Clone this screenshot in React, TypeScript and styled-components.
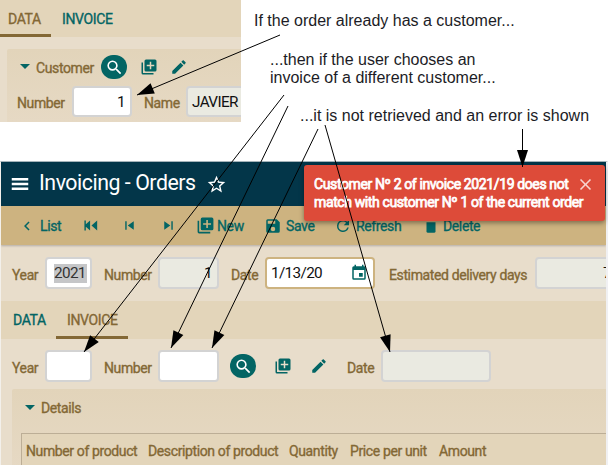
import React from "react";
import styled, { createGlobalStyle, css } from "styled-components";

const teal = "#036564";
const brown = "#836835";

const Global = createGlobalStyle`
  *{box-sizing:border-box}
  body{margin:0;background:#fff;overflow:hidden}
`;

const Page = styled.div`
  position: relative;
  width: 608px;
  height: 465px;
  overflow: hidden;
  background: #fff;
  font: 14px/18px Roboto, sans-serif;
  letter-spacing: -0.38px;
  color: ${brown};
`;
const Top = styled.div`
  display: flex;
  height: 161px;
`;
const CustomerPanel = styled.section`
  flex: none;
  width: 241px;
  height: 122px;
  overflow: hidden;
  background: #e8ddcb;
`;
const Notes = styled.div`
  flex: 1;
  padding-top: 12px;
  font: 16px/18px "Liberation Sans", sans-serif;
  color: #1c1c26;
`;
const Note = styled.p<{ $left: number; $after?: number }>`
  margin: 0 0 ${(p) => p.$after ?? 0}px ${(p) => p.$left}px;
  white-space: nowrap;
  letter-spacing: 0;
`;
const OrdersPanel = styled.section`
  display: flex;
  flex-direction: column;
  height: 304px;
  overflow: hidden;
  border-left: 1px solid #f3f0eb;
  border-right: 2px solid #f0f0f2;
  border-top: 1px solid #a5b4ba;
  background: #e8ddcb;
`;
const Tabs = styled.nav<{ $height: number }>`
  display: flex;
  flex: none;
  height: ${(p) => p.$height}px;
  background: #e3d5ba;
`;
const Tab = styled.div<{ $width: number; $pad: number; $active?: boolean }>`
  width: ${(p) => p.$width}px;
  padding: 10px 0 0 ${(p) => p.$pad}px;
  color: ${(p) => (p.$active ? brown : teal)};
  -webkit-text-stroke: 0.35px currentColor;
  ${(p) => p.$active && css`border-bottom: 3px solid ${brown};`}
`;
const Group = styled.div<{ $left: number; $height: number; $top?: number }>`
  flex: none;
  height: ${(p) => p.$height}px;
  margin: ${(p) => p.$top ?? 0}px 0 0 ${(p) => p.$left}px;
  overflow: hidden;
  border-radius: 2px 0 0 0;
  background: linear-gradient(#e2d4ba, #e6d9c4);
`;
const Row = styled.div<{ $height: number; $left: number; $top?: number }>`
  display: flex;
  flex: none;
  align-items: center;
  height: ${(p) => p.$height}px;
  padding: ${(p) => p.$top ?? 0}px 0 0 ${(p) => p.$left}px;
`;
const Label = styled.span<{ $width: number; $drop?: number }>`
  flex: none;
  width: ${(p) => p.$width}px;
  padding-top: ${(p) => p.$drop ?? 0}px;
  white-space: nowrap;
  -webkit-text-stroke: 0.35px currentColor;
`;
const Field = styled.div<{ $width: number; $after?: number; $kind?: "readonly" | "focus"; $end?: boolean; $short?: boolean }>`
  display: flex;
  flex: none;
  align-items: center;
  justify-content: ${(p) => (p.$end ? "flex-end" : "flex-start")};
  width: ${(p) => p.$width}px;
  height: ${(p) => (p.$short ? 31 : 32)}px;
  margin-right: ${(p) => p.$after ?? 0}px;
  padding: 0 5px 0 4px;
  border: 2px solid ${(p) => (p.$kind === "focus" ? "#cdb380" : "#d3d3d3")};
  border-radius: 4px;
  background: ${(p) => (p.$kind === "readonly" ? "#eaeae1" : "#fff")};
  color: #111;
  font-size: 15.3px;
  letter-spacing: -0.65px;
`;
const Selected = styled.span`
  margin-left: 3px;
  padding-right: 1px;
  background: #c5c6c8;
  color: #333;
  line-height: 19px;
`;
const DateValue = styled.span`
  width: 80px;
`;
const Search = styled.div<{ $after: number }>`
  display: flex;
  flex: none;
  align-items: center;
  justify-content: center;
  width: 26px;
  height: 24px;
  margin-right: ${(p) => p.$after}px;
  border-radius: 12px;
  background: ${teal};
`;
const IconBox = styled.svg<{ $after?: number; $color: string }>`
  display: block;
  flex: none;
  margin-right: ${(p) => p.$after ?? 0}px;
  fill: ${(p) => p.$color};
`;
const Caret = styled.i<{ $after: number }>`
  flex: none;
  margin: 0 ${(p) => p.$after}px 1px 0;
  border: 5px solid transparent;
  border-top-color: ${teal};
  border-bottom: 0;
`;
const Header = styled.header`
  display: flex;
  flex: none;
  align-items: center;
  height: 44px;
  padding-left: 8px;
  background: #033649;
`;
const Title = styled.h1`
  width: 167px;
  margin: 0 0 3px;
  color: #fff;
  font: 400 21.3px/26px Roboto, sans-serif;
  letter-spacing: -0.45px;
  white-space: nowrap;
`;
const Toolbar = styled.div`
  display: flex;
  flex: none;
  align-items: center;
  height: 39px;
  padding-left: 17px;
  background: #cdb380;
  box-shadow: 0 1px 2px rgba(60, 60, 90, 0.3);
  color: ${teal};
`;
const Table = styled.div`
  display: flex;
  height: 40px;
  margin: 15px 0 0 9px;
  padding: 8px 0 0 4px;
  border: 1px solid #bcae96;
  border-width: 1px 0 0 1px;
  background: #e3d5ba;
`;
const Toast = styled.div`
  position: absolute;
  left: 304px;
  top: 165px;
  display: flex;
  width: 301px;
  height: 56px;
  padding: 10px 0 0 10px;
  border-radius: 3px;
  background: #dd4b39;
  box-shadow: 0 2px 5px rgba(0, 0, 0, 0.4);
  color: #fff;
`;
const Message = styled.div`
  flex: none;
  width: 262px;
  white-space: nowrap;
  -webkit-text-stroke: 0.75px #fff;
`;
const Arrows = styled.svg`
  position: absolute;
  inset: 0;
  pointer-events: none;
`;

const paths = {
  search: "M9.5 3A6.5 6.5 0 0 1 16 9.5c0 1.61-.59 3.09-1.56 4.23l.27.27h.79l5 5-1.5 1.5-5-5v-.79l-.27-.27A6.516 6.516 0 0 1 9.5 16 6.5 6.5 0 0 1 3 9.5 6.5 6.5 0 0 1 9.5 3m0 2C7 5 5 7 5 9.5S7 14 9.5 14 14 12 14 9.5 12 5 9.5 5",
  add: "M19 11h-4v4h-2v-4H9V9h4V5h2v4h4m1-7H8a2 2 0 0 0-2 2v12a2 2 0 0 0 2 2h12a2 2 0 0 0 2-2V4a2 2 0 0 0-2-2M4 6H2v14a2 2 0 0 0 2 2h14v-2H4V6Z",
  edit: "M20.71 7.04c.39-.39.39-1.04 0-1.41l-2.34-2.34c-.37-.39-1.02-.39-1.41 0l-1.84 1.83 3.75 3.75M3 17.25V21h3.75L17.81 9.93l-3.75-3.75L3 17.25Z",
  menu: "M3 5.5h18v2.6H3V5.5m0 5.2h18v2.6H3v-2.6m0 5.2h18v2.6H3v-2.6Z",
  star: "M12 15.39l-3.76 2.27.99-4.28-3.32-2.88 4.38-.37L12 6.09l1.71 4.04 4.38.37-3.32 2.88.99 4.28M22 9.24l-7.19-.61L12 2 9.19 8.63 2 9.24l5.45 4.73L5.82 21 12 17.27 18.18 21l-1.64-7.03L22 9.24Z",
  chevron: "M15.41 16.58 10.83 12l4.58-4.59L14 6l-6 6 6 6 1.41-1.42Z",
  first: "M20 5v14l-8-7m-2-7v14l-8-7M4 5v14H2V5",
  prev: "M6 18V6h2v12H6m3.5-6L18 6v12l-8.5-6Z",
  next: "M16 18h2V6h-2M6 18l8.5-6L6 6v12Z",
  save: "M15 9H5V5h10m-3 14a3 3 0 1 1 0-6 3 3 0 0 1 0 6m5-16H5a2 2 0 0 0-2 2v14a2 2 0 0 0 2 2h14a2 2 0 0 0 2-2V7l-4-4Z",
  refresh: "M17.65 6.35A7.958 7.958 0 0 0 12 4a8 8 0 1 0 7.73 10h-2.08A6 6 0 1 1 12 6c1.66 0 3.14.69 4.22 1.78L13 11h7V4l-2.35 2.35Z",
  remove: "M6 19a2 2 0 0 0 2 2h8a2 2 0 0 0 2-2V7H6v12Z",
  calendar: "M19 19H5V8h14m-3-7v2H8V1H6v2H5a2 2 0 0 0-2 2v14a2 2 0 0 0 2 2h14a2 2 0 0 0 2-2V5a2 2 0 0 0-2-2h-1V1m-1 11h-5v5h5v-5Z",
  close: "M19 6.41 17.59 5 12 10.59 6.41 5 5 6.41 10.59 12 5 17.59 6.41 19 12 13.41 17.59 19 19 17.59 13.41 12 19 6.41Z",
};

function Icon({ name, size = 18, after, color = teal }: { name: keyof typeof paths; size?: number; after?: number; color?: string }) {
  return (
    <IconBox width={size} height={size} viewBox="0 0 24 24" $after={after} $color={color}>
      <path d={paths[name]} />
    </IconBox>
  );
}

const arrows = [
  [280, 35, 137, 95],
  [284, 95, 84, 352],
  [288, 106, 171, 348],
  [318, 129, 212, 348],
  [325, 125, 390, 352],
  [522.5, 129, 522.5, 167],
];

function Arrow({ points: [x1, y1, x2, y2] }: { points: number[] }) {
  const angle = (Math.atan2(y2 - y1, x2 - x1) * 180) / Math.PI;
  return (
    <g>
      <line x1={x1} y1={y1} x2={x2} y2={y2} stroke="#000" strokeWidth="1" />
      <path d="M0 0-17-5.5V5.5Z" transform={`translate(${x2} ${y2}) rotate(${angle})`} />
    </g>
  );
}

export default function App() {
  return (
    <Page>
      <Global />
      <Top>
        <CustomerPanel>
          <Tabs $height={37}>
            <Tab $width={51} $pad={8} $active>DATA</Tab>
            <Tab $width={70} $pad={11}>INVOICE</Tab>
          </Tabs>
          <Group $left={7} $height={73} $top={12}>
            <Row $height={36} $left={13}>
              <Caret $after={6} />
              <Label $width={65} $drop={1}>Customer</Label>
              <Search $after={13}><Icon name="search" size={19} color="#fff" /></Search>
              <Icon name="add" after={12} />
              <Icon name="edit" />
            </Row>
            <Row $height={33} $left={10}>
              <Label $width={55} $drop={3}>Number</Label>
              <Field $width={60} $after={12} $end $short>1</Field>
              <Label $width={42} $drop={3}>Name</Label>
              <Field $width={110} $kind="readonly" $short>JAVIER</Field>
            </Row>
          </Group>
        </CustomerPanel>
        <Notes>
          <Note $left={13} $after={21}>If the order already has a customer...</Note>
          <Note $left={29}>...then if the user chooses an</Note>
          <Note $left={29} $after={20}>invoice of a different customer...</Note>
          <Note $left={59}>...it is not retrieved and an error is shown</Note>
        </Notes>
      </Top>
      <OrdersPanel>
        <Header>
          <Icon name="menu" size={22} after={8} color="#fff" />
          <Title>Invoicing - Orders</Title>
          <Icon name="star" size={21} color="#fff" />
        </Header>
        <Toolbar>
          <Icon name="chevron" size={18} after={4} />
          <Label $width={43}>List</Label>
          <Icon name="first" size={17} after={21} />
          <Icon name="prev" size={17} after={22} />
          <Icon name="next" size={17} after={19} />
          <Icon name="add" size={19} after={2} />
          <Label $width={47}>New</Label>
          <Icon name="save" size={18} after={4} />
          <Label $width={48}>Save</Label>
          <Icon name="refresh" size={18} after={4} />
          <Label $width={66}>Refresh</Label>
          <Icon name="remove" size={18} after={3} />
          <Label $width={60}>Delete</Label>
        </Toolbar>
        <Row $height={56} $left={11}>
          <Label $width={33} $drop={3}>Year</Label>
          <Field $width={47} $after={12}><Selected>2021</Selected></Field>
          <Label $width={54} $drop={3}>Number</Label>
          <Field $width={61} $after={12} $end $kind="readonly">1</Field>
          <Label $width={34} $drop={3}>Date</Label>
          <Field $width={110} $after={14} $kind="focus">
            <DateValue>1/13/20</DateValue>
            <Icon name="calendar" />
          </Field>
          <Label $width={146} $drop={3}>Estimated delivery days</Label>
          <Field $width={83} $end $kind="readonly">7</Field>
        </Row>
        <Tabs $height={38}>
          <Tab $width={55} $pad={12}>DATA</Tab>
          <Tab $width={72} $pad={11} $active>INVOICE</Tab>
        </Tabs>
        <Row $height={50} $left={11} $top={4}>
          <Label $width={33} $drop={4}>Year</Label>
          <Field $width={47} $after={12} />
          <Label $width={54} $drop={4}>Number</Label>
          <Field $width={61} $after={11} />
          <Search $after={18}><Icon name="search" size={19} color="#fff" /></Search>
          <Icon name="add" after={18} />
          <Icon name="edit" after={19} />
          <Label $width={34} $drop={4}>Date</Label>
          <Field $width={110} $kind="readonly" />
        </Row>
        <Group $left={11} $height={80}>
          <Row $height={29} $left={13} $top={9}>
            <Caret $after={6} />
            <Label $width={65}>Details</Label>
          </Row>
          <Table>
            <Label $width={122}>Number of product</Label>
            <Label $width={141}>Description of product</Label>
            <Label $width={61}>Quantity</Label>
            <Label $width={89}>Price per unit</Label>
            <Label $width={60}>Amount</Label>
          </Table>
        </Group>
      </OrdersPanel>
      <Toast>
        <Message>
          <div>Customer Nº 2 of invoice 2021/19 does not</div>
          <div>match with customer Nº 1 of the current order</div>
        </Message>
        <Icon name="close" size={19} color="#f7d4cf" />
      </Toast>
      <Arrows width="608" height="465" viewBox="0 0 608 465">
        {arrows.map((points) => <Arrow key={points.join()} points={points} />)}
      </Arrows>
    </Page>
  );
}
